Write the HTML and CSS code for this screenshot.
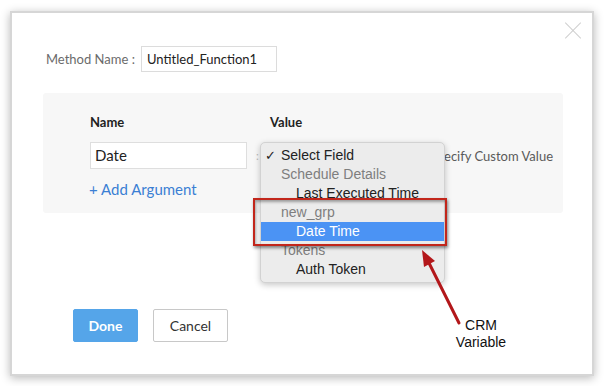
FILE: index.html
```html
<!DOCTYPE html>
<html>
<head>
<meta charset="utf-8">
<link rel="stylesheet" href="styles.css">
</head>
<body>
<div class="frame">
  <span class="close" aria-label="Close"></span>
  <div class="method-row">
    <label class="method-label">Method Name :</label>
    <div class="method-input">Untitled_Function1</div>
  </div>
  <div class="panel">
    <div class="head-row">
      <div class="col-name">Name</div>
      <div class="col-value">Value</div>
    </div>
    <div class="arg-row">
      <div class="name-input">Date</div>
      <span class="sep">:</span>
      <span class="custom">Specify Custom Value</span>
    </div>
    <div class="add-arg">+ Add Argument</div>
    <div class="menu">
      <div class="opt check"><span class="tick">✓</span>Select Field</div>
      <div class="opt group">Schedule Details</div>
      <div class="opt item">Last Executed Time</div>
      <div class="opt group">new_grp</div>
      <div class="opt item sel">Date Time</div>
      <div class="opt group">Tokens</div>
      <div class="opt item">Auth Token</div>
    </div>
  </div>
  <div class="actions">
    <button class="btn done">Done</button>
    <button class="btn cancel">Cancel</button>
  </div>
  <div class="highlight"></div>
  <svg class="arrow" width="60" height="85" viewBox="0 0 60 85">
    <line x1="19" y1="17" x2="49" y2="77" stroke="#b3171a" stroke-width="3" stroke-linecap="round"/>
    <polygon points="12,4 25,15 14,21" fill="#b3171a"/>
  </svg>
  <div class="note">CRM<br>Variable</div>
</div>
</body>
</html>
```

FILE: styles.css
```css
html, body {
  margin: 0;
  padding: 0;
  background: #fff;
}
body {
  font-family: Lato, "Open Sans", sans-serif;
  width: 606px;
  height: 386px;
  overflow: hidden;
}
.frame {
  position: relative;
  margin: 11px 0 0 10px;
  width: 580px;
  height: 361px;
  border: 2px solid #d6d6d6;
  background: #fff;
  box-shadow: 0 2px 9px rgba(0,0,0,0.28);
}
.close {
  position: absolute;
  left: 553px;
  top: 10px;
  width: 16px;
  height: 16px;
}
.close::before, .close::after {
  content: "";
  position: absolute;
  left: -3px;
  top: 7px;
  width: 22px;
  height: 1px;
  background: #cfcfcf;
  transform: rotate(45deg);
}
.close::after { transform: rotate(-45deg); }

.method-row {
  display: flex;
  align-items: center;
  margin: 33px 0 0 34px;
  height: 26px;
}
.method-label {
  width: 95px;
  font-size: 13px;
  color: #6b6b6b;
}
.method-input {
  box-sizing: border-box;
  width: 136px;
  height: 26px;
  border: 1px solid #dcdcdc;
  padding: 0 0 0 5px;
  font-size: 13px;
  line-height: 24px;
  color: #222;
}

.panel {
  position: relative;
  box-sizing: border-box;
  margin: 21px 0 0 31px;
  width: 520px;
  height: 120px;
  background: #f7f7f7;
  border-radius: 3px;
  padding: 20px 10px 0 47px;
}
.head-row {
  display: flex;
  height: 18px;
  line-height: 18px;
  font-size: 13px;
  font-weight: bold;
  color: #222;
}
.col-name { width: 180px; }
.arg-row {
  display: flex;
  align-items: center;
  margin-top: 11px;
  height: 27px;
}
.name-input {
  box-sizing: border-box;
  width: 157px;
  height: 27px;
  background: #fff;
  border: 1px solid #dedede;
  padding-left: 4px;
  font-size: 15px;
  line-height: 25px;
  color: #222;
}
.sep {
  margin-left: 9px;
  color: #b8b8b8;
  font-size: 11px;
}
.custom {
  margin-left: auto;
  font-size: 13px;
  color: #5a5a5a;
}
.add-arg {
  margin-top: 11px;
  margin-left: -1px;
  height: 18px;
  line-height: 18px;
  font-size: 15px;
  color: #3b7fd4;
}

.menu {
  position: absolute;
  left: 217px;
  top: 49px;
  box-sizing: border-box;
  width: 185px;
  height: 141px;
  padding: 3px 0 5px;
  background: #ececec;
  border: 1px solid #d2d2d2;
  border-radius: 5px;
  box-shadow: 0 2px 6px rgba(0,0,0,0.22);
  font-family: "Liberation Sans", Arial, sans-serif;
  font-size: 14px;
  z-index: 2;
}
.opt {
  height: 19px;
  line-height: 19px;
  white-space: nowrap;
  color: #222;
}
.check { padding-left: 4px; }
.tick {
  display: inline-block;
  width: 16px;
  font-size: 13px;
}
.group { padding-left: 20px; color: #7e7e7e; }
.item { padding-left: 35px; }
.sel {
  background: #4b93f4;
  color: #fff;
}

.actions {
  display: flex;
  gap: 15px;
  margin: 96px 0 0 61px;
}
.btn {
  box-sizing: border-box;
  height: 33px;
  border-radius: 2px;
  font-family: Lato, sans-serif;
  font-size: 14px;
  padding: 0;
  cursor: pointer;
}
.done {
  width: 65px;
  background: #55a5e9;
  border: 1px solid #55a5e9;
  color: #fff;
  font-weight: bold;
}
.cancel {
  width: 75px;
  background: #fff;
  border: 1px solid #c8c8c8;
  color: #333;
}

.highlight {
  position: absolute;
  left: 241px;
  top: 185px;
  width: 190px;
  height: 44px;
  border: 2px solid #c2261b;
  box-shadow: 1px 2px 3px rgba(0,0,0,0.45), inset 1px 2px 3px rgba(0,0,0,0.35);
  z-index: 3;
}
.arrow {
  position: absolute;
  left: 398px;
  top: 233px;
  z-index: 3;
}
.note {
  position: absolute;
  left: 439px;
  top: 304px;
  width: 60px;
  text-align: center;
  font-family: "Liberation Sans", Arial, sans-serif;
  font-size: 14px;
  line-height: 17px;
  color: #111;
}
```
